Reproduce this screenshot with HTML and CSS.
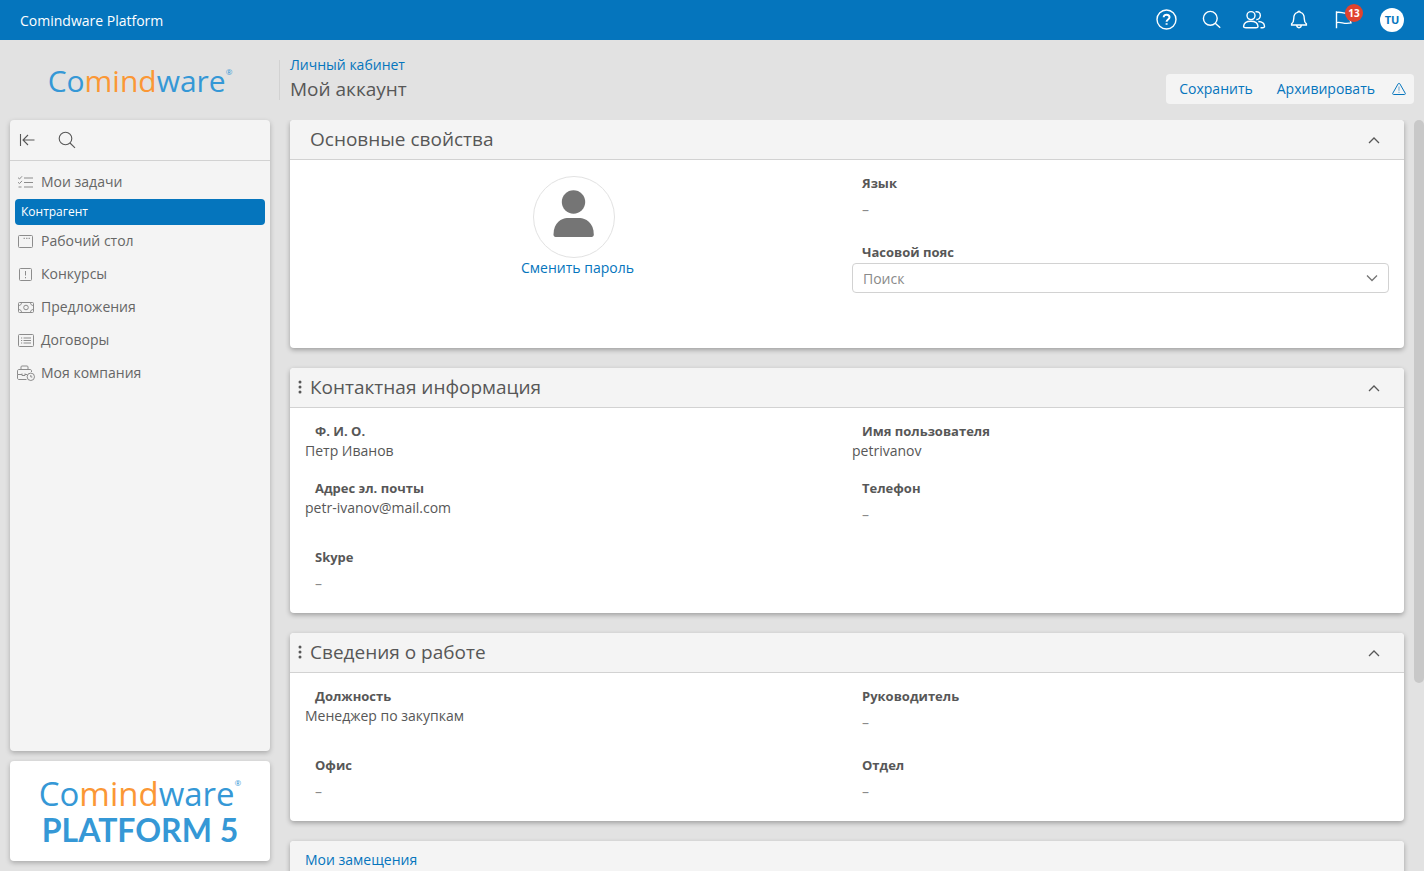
FILE: index.html
```html
<!DOCTYPE html>
<html lang="ru">
<head>
<meta charset="utf-8">
<title>Comindware Platform</title>
<link rel="stylesheet" href="styles.css">
</head>
<body>
<header class="topbar">
  <span class="topbar-name">Comindware Platform</span>
  <div class="topbar-tools">
    <button class="tool" type="button" aria-label="Справка"><svg viewBox="0 0 24 24"><circle cx="14.500" cy="11.500" r="9.500"/><path class="thick" d="M11.700 9.300c0-3.600 5.800-3.500 5.800 0 0 2.200-2.900 2.200-2.900 4.400M14.600 15.200v1.600"/></svg></button>
    <button class="tool" type="button" aria-label="Поиск"><svg viewBox="0 0 24 24"><circle cx="13.300" cy="10.300" r="6.900"/><path d="M18.200 15.200l5 4.600"/></svg></button>
    <button class="tool" type="button" aria-label="Пользователи"><svg viewBox="0 0 24 24"><circle cx="9" cy="7.600" r="4"/><path d="M4 19.700c-1.500 0-2.600-.2-2.400-1.500.3-3.400 2.500-5 7.200-5s6.900 1.600 7.200 5c.1 1.200-.8 1.500-2 1.500zM13.500 3.800c6.600-1.200 6 8.200.8 7.700M16.300 13.500c4 .1 6 2 6.200 4.700.1 1-.6 1.500-1.800 1.500h-2.200"/></svg></button>
    <button class="tool" type="button" aria-label="Уведомления"><svg viewBox="0 0 24 24"><path d="M4.600 17v-1.100c1.600-1.400 2.100-2.700 2.100-5 0-3.800 1.400-6.100 4.100-6.500 0-1.500 2.400-1.500 2.400 0 2.700.4 4.100 2.700 4.100 6.500 0 2.300.5 3.600 2.100 5V17zM9.700 17.300c.2 3.200 4.400 3.200 4.600 0"/></svg></button>
    <button class="tool tool-flag" type="button" aria-label="Задачи"><svg viewBox="0 0 24 24"><path d="M4.500 3.300v16.900M4.500 4.500c5-1.300 6.500 2 14.500.2l-1.600 5 1.600 5.200c-7.500 1.800-9.500-1.600-14.500-.2"/></svg><span class="badge">13</span></button>
    <button class="user" type="button">TU</button>
  </div>
</header>
<div class="shell">
  <aside class="sidebar">
    <div class="brand"><span>Co<b>mind</b>ware</span><sup>®</sup></div>
    <nav class="panel">
      <div class="panel-tools">
        <button class="panel-tool" type="button" aria-label="Свернуть меню"><svg viewBox="0 0 18 18"><path d="M2.500 3v12M16.500 9H5.500M10 4L5 9l5 5"/></svg></button>
        <button class="panel-tool" type="button" aria-label="Поиск по меню"><svg viewBox="0 0 18 18"><circle cx="7.500" cy="7.500" r="6.300"/><path d="M12 12l5 4.800"/></svg></button>
      </div>
      <ul class="menu">
        <li><a class="item" href="#"><svg viewBox="0 0 18 18"><path d="M7 5h9M7 9.500h9M7 14h9M1 4.600l1.500 1.400L5 3.300M1 9.200l1.500 1.400L5 7.900M1.500 14h3"/></svg>Мои задачи</a></li>
        <li><a class="current" href="#">Контрагент</a></li>
        <li><a class="item" href="#"><svg viewBox="0 0 18 18"><rect x="1.500" y="3.500" width="14" height="12" rx="1"/><path class="dots" d="M6.500 6.300h7"/></svg>Рабочий стол</a></li>
        <li><a class="item" href="#"><svg viewBox="0 0 18 18"><rect x="2.500" y="3.500" width="12" height="12" rx="1"/><path d="M8.500 6v4.500M8.500 12v1.300"/></svg>Конкурсы</a></li>
        <li><a class="item" href="#"><svg viewBox="0 0 18 18"><rect x="1.500" y="4.500" width="15" height="10" rx="1"/><circle cx="9" cy="9.500" r="2.300"/><path d="M4.500 4.500c0 2-1 3-3 3M13.500 4.500c0 2 1 3 3 3M4.500 14.500c0-2-1-3-3-3M13.500 14.500c0-2 1-3 3-3"/></svg>Предложения</a></li>
        <li><a class="item" href="#"><svg viewBox="0 0 18 18"><rect x="1.500" y="3.500" width="15" height="12" rx="1"/><path d="M4 7h1.200M6.500 7h7.500M4 9.500h1.200M6.500 9.500h7.500M4 12h1.200M6.500 12h7.500"/></svg>Договоры</a></li>
        <li><a class="item" href="#"><svg viewBox="0 0 18 18"><path d="M9.500 15.500H2c-1 0-1.500-.5-1.500-1.500v-3.500H5M8 10.500h2M.5 10.500V7c0-1 .5-1.500 1.500-1.500h11c1 0 1.500.5 1.500 1.500v1M4 5.500V3c0-.6.300-1 1-1h5c.7 0 1 .400 1 1v2.500M5 9.500v2h3v-2"/><circle cx="13.800" cy="12.800" r="3.700"/><path d="M13.800 11v2h1.500"/></svg>Моя компания</a></li>
      </ul>
    </nav>
    <div class="promo">
      <div class="brand brand-large"><span>Co<b>mind</b>ware</span><sup>®</sup></div>
      <div class="promo-name">PLATFORM 5</div>
    </div>
  </aside>
  <main class="main">
    <div class="page-head">
      <div class="divider"></div>
      <div class="crumbs">
        <a href="#">Личный кабинет</a>
        <h1>Мой аккаунт</h1>
      </div>
      <div class="actions">
        <button type="button">Сохранить</button>
        <button type="button">Архивировать</button>
        <svg class="warn" viewBox="0 0 14 14"><path d="M7 1.300c.5 0 .7.300.9.600l5.300 9.300c.4.800 0 1.300-.8 1.300H1.600c-.8 0-1.200-.5-.8-1.300l5.300-9.300c.2-.3.400-.6.900-.6z"/><path class="mark" d="M7 4.500v4.300M7 9.800v1.200"/></svg>
      </div>
    </div>
    <div class="content">
      <div class="cards">
        <section class="card">
          <div class="card-head"><h2>Основные свойства</h2><button class="fold" type="button" aria-label="Свернуть"><svg viewBox="0 0 12 8"><path d="M1 7l5-5 5 5"/></svg></button></div>
          <div class="card-body card-body-tall">
            <div class="profile">
              <svg class="avatar" viewBox="0 0 82 82"><circle class="ring" cx="41" cy="41" r="40.500"/><circle cx="40.500" cy="26" r="11.700"/><path d="M20.500 58.500C20.500 46.500 29 42 34 42h13c5 0 13.800 4.500 13.800 16.500 0 1.500-.8 2.500-2.300 2.500h-36c-1.200 0-2-1-2-2.500z"/></svg>
              <a href="#">Сменить пароль</a>
            </div>
            <dl class="fields fields-single">
              <div class="field"><dt>Язык</dt><dd class="empty">–</dd></div>
              <div class="field"><dt><label for="zone">Часовой пояс</label></dt><dd class="control"><select id="zone"><option>Поиск</option></select><svg viewBox="0 0 12 8"><path d="M1 1.500l5 5 5-5"/></svg></dd></div>
            </dl>
          </div>
        </section>
        <section class="card">
          <div class="card-head"><svg class="grip" viewBox="0 0 4 14"><circle cx="2" cy="2" r="1.500"/><circle cx="2" cy="7" r="1.500"/><circle cx="2" cy="12" r="1.500"/></svg><h2>Контактная информация</h2><button class="fold" type="button" aria-label="Свернуть"><svg viewBox="0 0 12 8"><path d="M1 7l5-5 5 5"/></svg></button></div>
          <dl class="card-body fields">
            <div class="field"><dt>Ф. И. О.</dt><dd>Петр Иванов</dd></div>
            <div class="field"><dt>Имя пользователя</dt><dd>petrivanov</dd></div>
            <div class="field"><dt>Адрес эл. почты</dt><dd>petr-ivanov@mail.com</dd></div>
            <div class="field"><dt>Телефон</dt><dd class="empty">–</dd></div>
            <div class="field"><dt>Skype</dt><dd class="empty">–</dd></div>
          </dl>
        </section>
        <section class="card">
          <div class="card-head"><svg class="grip" viewBox="0 0 4 14"><circle cx="2" cy="2" r="1.500"/><circle cx="2" cy="7" r="1.500"/><circle cx="2" cy="12" r="1.500"/></svg><h2>Сведения о работе</h2><button class="fold" type="button" aria-label="Свернуть"><svg viewBox="0 0 12 8"><path d="M1 7l5-5 5 5"/></svg></button></div>
          <dl class="card-body fields">
            <div class="field"><dt>Должность</dt><dd>Менеджер по закупкам</dd></div>
            <div class="field"><dt>Руководитель</dt><dd class="empty">–</dd></div>
            <div class="field"><dt>Офис</dt><dd class="empty">–</dd></div>
            <div class="field"><dt>Отдел</dt><dd class="empty">–</dd></div>
          </dl>
        </section>
        <section class="card">
          <div class="card-head card-head-link"><a href="#">Мои замещения</a></div>
        </section>
      </div>
      <div class="track"><div class="thumb"></div></div>
    </div>
  </main>
</div>
</body>
</html>
```
FILE: styles.css
```css
* { box-sizing: border-box; }
body {
  margin: 0;
  height: 100vh;
  display: flex;
  flex-direction: column;
  overflow: hidden;
  background: #e2e2e2;
  color: #575757;
  font: 14px/20px "Open Sans", "Noto Sans", sans-serif;
}
a { color: #0575bd; text-decoration: none; }
button { border: 0; padding: 0; background: none; font: inherit; color: inherit; cursor: pointer; }
svg { display: block; fill: none; stroke: currentColor; }
h1, h2, ul, dl, dd { margin: 0; padding: 0; font-weight: 400; }
ul { list-style: none; }

.topbar {
  flex: none;
  height: 40px;
  padding: 0 20px;
  display: flex;
  align-items: center;
  justify-content: space-between;
  background: #0575bd;
  color: #fff;
}
.topbar-name { padding-top: 2px; }
.topbar-tools { display: flex; align-items: center; gap: 21px; }
.tool { position: relative; width: 24px; height: 24px; }
.tool svg { width: 24px; height: 24px; stroke-width: 1.4; overflow: visible; }
.tool .thick { stroke-width: 2; }
.tool-flag { margin-right: 3px; }
.badge {
  position: absolute;
  left: 13px;
  top: -4px;
  width: 18px;
  height: 18px;
  border-radius: 9px;
  background: #e0432e;
  font: 700 10px/18px "Open Sans", sans-serif;
  text-align: center;
}
.user {
  width: 24px;
  height: 24px;
  border-radius: 50%;
  background: #fff;
  color: #0575bd;
  font-size: 11px;
  font-weight: 700;
}

.shell { flex: 1; min-height: 0; display: grid; grid-template-columns: 280px minmax(0, 1fr); }
.sidebar { display: flex; flex-direction: column; min-height: 0; padding: 0 10px 10px; }
.brand {
  flex: none;
  height: 80px;
  padding-top: 2px;
  display: flex;
  align-items: center;
  justify-content: center;
  color: #3598d6;
  font-size: 30px;
  line-height: 40px;
}
.brand b { font-weight: 400; color: #fb9735; }
.brand sup { align-self: flex-start; margin-top: 20px; font-size: 8px; line-height: 20px; }
.panel {
  flex: 1;
  min-height: 0;
  border-radius: 4px;
  background: #f4f4f4;
  box-shadow: 0 2px 5px rgba(0, 0, 0, .25);
}
.panel-tools {
  height: 41px;
  padding: 0 8px;
  display: flex;
  align-items: center;
  gap: 22px;
  border-bottom: 1px solid #d2d2d2;
}
.panel-tool svg { width: 18px; height: 18px; stroke-width: 1.1; }
.menu { padding: 5px; }
.item { display: flex; align-items: center; gap: 6px; height: 33px; padding: 0 2px 2px; color: #666; }
.item svg { width: 18px; height: 18px; margin-top: 1px; color: #8c8c8c; overflow: visible; }
.item .dots { stroke-dasharray: 1.500 1; }
.current {
  display: block;
  padding: 0 6px;
  border-radius: 4px;
  background: #0575bd;
  color: #fff;
  font-size: 12px;
  font-weight: 500;
  line-height: 26px;
}
.promo {
  flex: none;
  height: 100px;
  margin-top: 10px;
  border-radius: 4px;
  background: #fff;
  box-shadow: 0 2px 5px rgba(0, 0, 0, .25);
}
.brand-large { height: 48px; padding-top: 18px; font-size: 33px; }
.brand-large sup { margin-top: -6px; }
.promo-name { color: #3598d6; font: 700 32px/42px Lato, sans-serif; text-align: center; }

.main { display: flex; flex-direction: column; min-width: 0; min-height: 0; }
.page-head { flex: none; height: 80px; padding: 15px 10px 16px 0; display: flex; align-items: flex-end; }
.divider { align-self: center; width: 1px; height: 40px; margin-left: -1px; background: #d2d2d2; }
.crumbs { flex: 1; align-self: flex-start; padding-left: 10px; }
.crumbs a { display: block; }
.crumbs h1 { font-size: 19px; line-height: 28px; }
.actions {
  height: 30px;
  padding: 0 8px 0 13px;
  display: flex;
  align-items: center;
  border-radius: 4px;
  background: #f4f4f4;
  color: #0575bd;
}
.actions button { margin-right: 24px; }
.actions button + button { margin-right: 17px; }
.warn { width: 14px; height: 14px; }
.warn .mark { stroke: #6aa5cf; }

.content { flex: 1; min-height: 0; display: flex; }
.cards { flex: 1; min-width: 0; overflow: hidden; padding: 0 10px; }
.card { margin-bottom: 20px; border-radius: 4px; background: #fff; box-shadow: 0 2px 5px rgba(0, 0, 0, .3); }
.card-head {
  position: relative;
  height: 40px;
  padding: 0 20px;
  display: flex;
  align-items: center;
  justify-content: space-between;
  border-bottom: 1px solid #d2d2d2;
  border-radius: 4px 4px 0 0;
  background: #f4f4f4;
}
.card-head-link { padding: 0 15px 2px; }
.card-head h2 { padding-bottom: 2px; font-size: 19px; line-height: 28px; }
.grip { position: absolute; left: 8px; top: 12px; width: 4px; height: 14px; fill: #575757; stroke: none; }
.fold { padding: 4px; }
.fold svg, .control svg { width: 12px; height: 8px; stroke-width: 1.3; }
.card-body { padding: 14px 15px; display: grid; grid-template-columns: 1fr 1fr; column-gap: 10px; }
.card-body-tall { padding-bottom: 55px; }
.fields { row-gap: 18px; }
.fields-single { display: grid; align-content: start; }
.field dt { padding: 0 10px; font-size: 13px; font-weight: 700; line-height: 18px; }
.field dd { margin-top: 1px; }
.field .empty { margin-top: 3px; padding: 0 10px; line-height: 30px; color: #8a8a8a; }
.field .control { position: relative; margin-top: 2px; }
.control select {
  appearance: none;
  display: block;
  width: 100%;
  height: 30px;
  padding: 1px 10px 0;
  border: 1px solid #d2d2d2;
  border-radius: 4px;
  background: #fff;
  color: #8a8a8a;
  font: inherit;
}
.control svg { position: absolute; right: 11px; top: 11px; pointer-events: none; color: #757575; }
.profile { padding-top: 2px; display: flex; flex-direction: column; align-items: center; }
.profile a { padding-left: 8px; }
.avatar { width: 82px; height: 82px; fill: #757575; stroke: none; }
.avatar .ring { fill: none; stroke: #e2e2e2; }
.track { flex: none; width: 10px; }
.thumb { height: 75%; border-radius: 5px; background: #c8c8c8; }
```
